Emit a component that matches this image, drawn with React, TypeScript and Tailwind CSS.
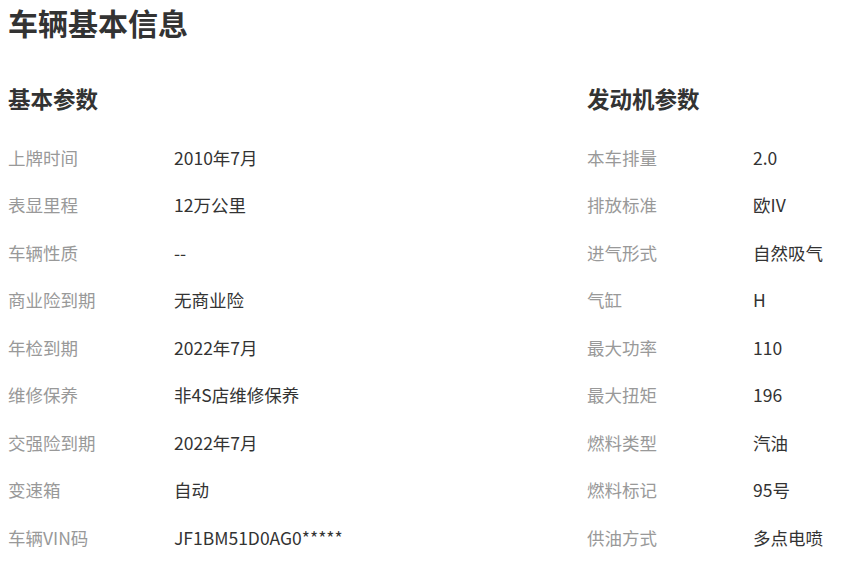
import React from "react";

const left: [string, string][] = [
  ["上牌时间", "2010年7月"],
  ["表显里程", "12万公里"],
  ["车辆性质", "--"],
  ["商业险到期", "无商业险"],
  ["年检到期", "2022年7月"],
  ["维修保养", "非4S店维修保养"],
  ["交强险到期", "2022年7月"],
  ["变速箱", "自动"],
  ["车辆VIN码", "JF1BM51D0AG0*****"],
];

const right: [string, string][] = [
  ["本车排量", "2.0"],
  ["排放标准", "欧IV"],
  ["进气形式", "自然吸气"],
  ["气缸", "H"],
  ["最大功率", "110"],
  ["最大扭矩", "196"],
  ["燃料类型", "汽油"],
  ["燃料标记", "95号"],
  ["供油方式", "多点电喷"],
];

function Section({ title, rows, className }: { title: string; rows: [string, string][]; className: string }) {
  return (
    <div className={className}>
      <h2 className="text-[22.5px] font-bold leading-[40px] text-[#333]">{title}</h2>
      <div className="mt-[16px]">
        {rows.map(([k, v]) => (
          <div key={k} className="flex h-[47.5px] items-center text-[17.5px]">
            <span className="w-[166px] shrink-0 text-[#999]">{k}</span>
            <span className="text-[#333]">{v}</span>
          </div>
        ))}
      </div>
    </div>
  );
}

export default function App() {
  return (
    <div
      className="w-[845px] h-[562px] overflow-hidden bg-white px-[8px]"
      style={{ fontFamily: '"Noto Sans CJK SC", "Noto Sans", sans-serif' }}
    >
      <h1 className="text-[30px] font-bold leading-[44px] text-[#333]">车辆基本信息</h1>
      <div className="mt-[34px] flex">
        <Section title="基本参数" rows={left} className="w-[579px] shrink-0" />
        <Section title="发动机参数" rows={right} className="flex-1" />
      </div>
    </div>
  );
}
